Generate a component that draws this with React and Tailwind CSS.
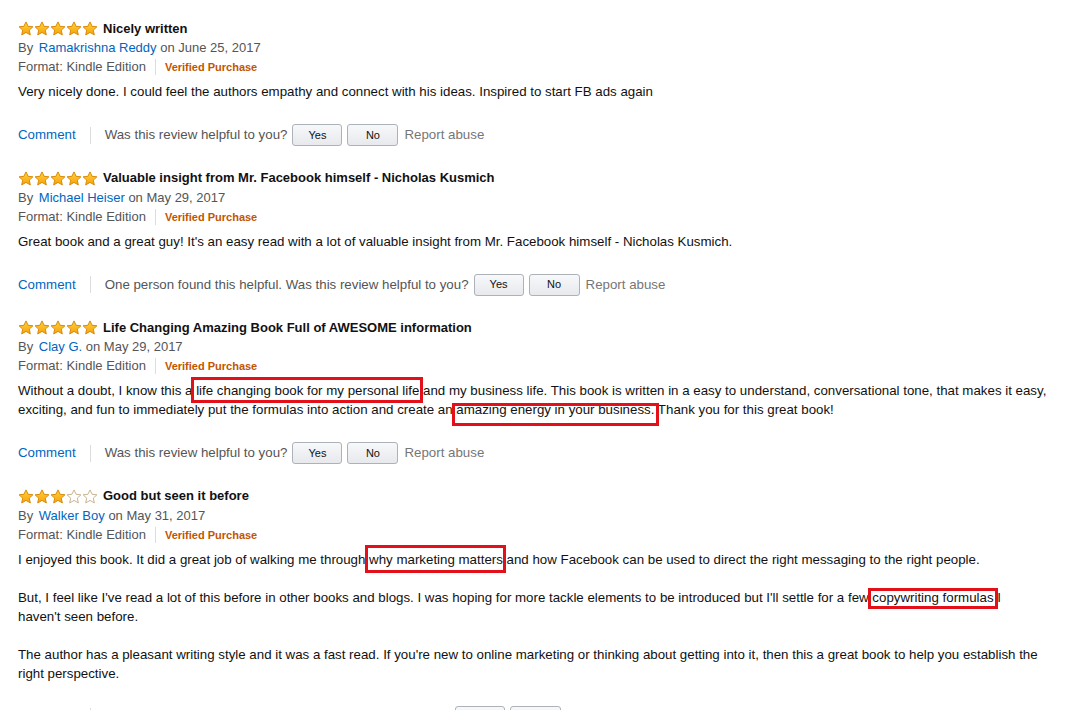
import React from 'react';

const FONT = { fontFamily: '"Liberation Sans", Arial, sans-serif' };

function Star({ filled }) {
    return (
        <svg width="16" height="15" viewBox="0 0 16 15" className="block">
            <defs>
                <linearGradient id="starFill" x1="0" y1="0" x2="0" y2="1">
                    <stop offset="0" stopColor="#ffd43b" />
                    <stop offset="1" stopColor="#f7a10c" />
                </linearGradient>
            </defs>
            <path
                d="M8 0.9 L10.1 5.3 L14.9 5.8 L11.3 9.1 L12.3 13.9 L8 11.4 L3.7 13.9 L4.7 9.1 L1.1 5.8 L5.9 5.3 Z"
                fill={filled ? 'url(#starFill)' : '#ffffff'}
                stroke={filled ? '#d98a09' : '#c9b48f'}
                strokeWidth="1"
                strokeLinejoin="round"
            />
        </svg>
    );
}

function Stars({ count }) {
    return (
        <div className="flex">
            {[1, 2, 3, 4, 5].map(i => <Star key={i} filled={i <= count} />)}
        </div>
    );
}

// red annotation box drawn over the highlighted phrase
function Mark({ text, box }) {
    return (
        <span className="relative">
            {text}
            <span className={'absolute pointer-events-none border-[3px] border-[#e3101a] ' + box} />
        </span>
    );
}

const reviews = [
    {
        stars: 5,
        title: 'Nicely written',
        author: 'Ramakrishna Reddy',
        date: 'June 25, 2017',
        body: [['Very nicely done. I could feel the authors empathy and connect with his ideas. Inspired to start FB ads again']],
        helpful: null,
    },
    {
        stars: 5,
        title: 'Valuable insight from Mr. Facebook himself - Nicholas Kusmich',
        author: 'Michael Heiser',
        date: 'May 29, 2017',
        body: [["Great book and a great guy! It's an easy read with a lot of valuable insight from Mr. Facebook himself - Nicholas Kusmich."]],
        helpful: 'One person found this helpful.',
    },
    {
        stars: 5,
        title: 'Life Changing Amazing Book Full of AWESOME information',
        author: 'Clay G.',
        date: 'May 29, 2017',
        body: [[
            'Without a doubt, I know this a ',
            { text: 'life changing book for my personal life', box: '-left-[5px] -right-[4px] -top-[6px] -bottom-[5px]' },
            ' and my business life. This book is written in a easy to understand, conversational tone, that makes it easy, exciting, and fun to immediately put the formulas into action and create an ',
            { text: 'amazing energy in your business.', box: '-left-[4px] -right-[5px] top-[1px] -bottom-[9px]' },
            ' Thank you for this great book!',
        ]],
        helpful: null,
    },
    {
        stars: 3,
        title: 'Good but seen it before',
        author: 'Walker Boy',
        date: 'May 31, 2017',
        body: [
            [
                'I enjoyed this book. It did a great job of walking me through ',
                { text: 'why marketing matters', box: '-left-[4px] -right-[3px] -top-[7px] -bottom-[6px]' },
                ' and how Facebook can be used to direct the right messaging to the right people.',
            ],
            [
                "But, I feel like I've read a lot of this before in other books and blogs. I was hoping for more tackle elements to be introduced but I'll settle for a few ",
                { text: 'copywriting formulas', box: '-left-[4px] -right-[4px] -top-[2px] -bottom-[4px]' },
                ' I',
                { br: true },
                "haven't seen before.",
            ],
            [
                "The author has a pleasant writing style and it was a fast read. If you're new to online marketing or thinking about getting into it, then this a great book to help you establish the right perspective.",
            ],
        ],
        helpful: '2 people found this helpful.',
    },
];

function Segment({ seg }) {
    if (typeof seg === 'string') return <span>{seg}</span>;
    if (seg.br) return <br />;
    return <Mark text={seg.text} box={seg.box} />;
}

function Review({ review }) {
    return (
        <div className="mb-[22.5px]">
            <div className="flex items-center gap-[5px] h-[19px]">
                <Stars count={review.stars} />
                <span className="font-bold text-[13px] text-[#111]">{review.title}</span>
            </div>
            <div className="h-[19px] leading-[19px] text-[#555]">
                By <a className="text-[#0066c0] ml-[2px]">{review.author}</a> on {review.date}
            </div>
            <div className="h-[20px] leading-[20px] flex items-center text-[#555]">
                <span>Format: Kindle Edition</span>
                <span className="mx-[9px] h-[16px] border-l border-[#ddd]" />
                <span className="text-[#c45500] font-bold text-[11px]">Verified Purchase</span>
            </div>
            <div className="mt-[5px] text-[#111] leading-[19px] text-[13.3px]">
                {review.body.map((para, i) => (
                    <p key={i} className={i > 0 ? 'mt-[19px]' : ''}>
                        {para.map((seg, j) => <Segment key={j} seg={seg} />)}
                    </p>
                ))}
            </div>
            <div className="mt-[23px] flex items-center h-[22px] text-[13.3px]">
                <a className="text-[#0066c0]">Comment</a>
                <span className="mx-[14px] h-[17px] border-l border-[#ddd]" />
                <span className="text-[#555]">{review.helpful ? review.helpful + ' ' : ''}Was this review helpful to you?</span>
                <button className="ml-[5px] w-[50px] h-[22px] rounded-[3px] border border-[#adb1b8] bg-gradient-to-b from-[#f7f8fa] to-[#e7e9ec] text-[11px] text-[#111]">Yes</button>
                <button className="ml-[5px] w-[51px] h-[22px] rounded-[3px] border border-[#adb1b8] bg-gradient-to-b from-[#f7f8fa] to-[#e7e9ec] text-[11px] text-[#111]">No</button>
                <a className="ml-[6px] text-[#767676]">Report abuse</a>
            </div>
        </div>
    );
}

export default function App() {
    return (
        <div className="bg-white min-h-screen pl-[18px] pr-[24px] pt-[19px] text-[13px]" style={FONT}>
            {reviews.map((r, i) => <Review key={i} review={r} />)}
        </div>
    );
}
